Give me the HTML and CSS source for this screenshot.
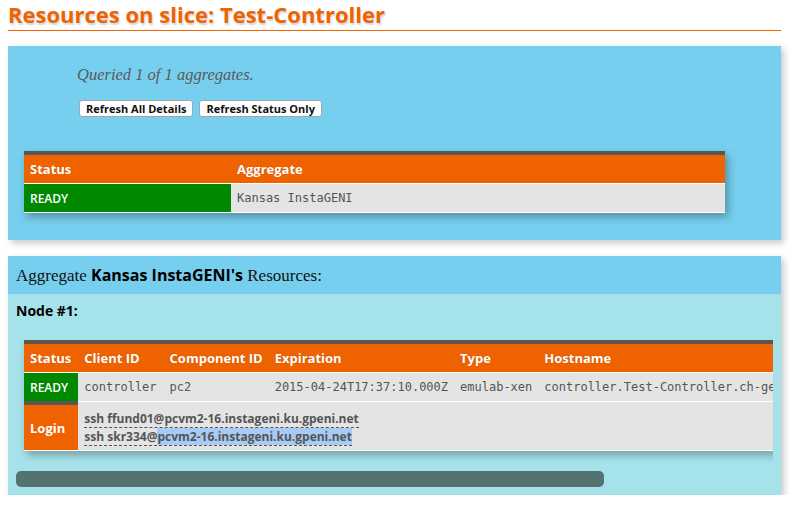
FILE: index.html
```html
<!DOCTYPE html>
<html>
<head>
<meta charset="utf-8">
<link rel="stylesheet" href="styles.css">
</head>
<body>
<div class="page">
  <h1 class="title">Resources on slice: Test-Controller</h1>

  <section class="box status-box">
    <p class="queried">Queried 1 of 1 aggregates.</p>
    <div class="buttons">
      <button class="btn">Refresh All Details</button>
      <button class="btn">Refresh Status Only</button>
    </div>
    <table class="tbl agg-tbl">
      <thead>
        <tr><th class="col-status">Status</th><th>Aggregate</th></tr>
      </thead>
      <tbody>
        <tr><td class="ready">READY</td><td class="mono">Kansas InstaGENI</td></tr>
      </tbody>
    </table>
  </section>

  <section class="box res-box">
    <div class="res-head">Aggregate <b class="agg-name">Kansas InstaGENI's</b> Resources:</div>
    <div class="res-body">
      <div class="node-title">Node #1:</div>
      <div class="node-scroll">
        <div class="node-clip">
          <table class="tbl node-tbl">
            <thead>
              <tr>
                <th class="c-wide">Status</th><th class="c-wide">Client ID</th><th>Component ID</th><th>Expiration</th><th>Type</th><th>Hostname</th>
              </tr>
            </thead>
            <tbody>
              <tr>
                <td class="ready c-wide">READY</td>
                <td class="mono c-wide">controller</td>
                <td class="mono">pc2</td>
                <td class="mono">2015-04-24T17:37:10.000Z</td>
                <td class="mono">emulab-xen</td>
                <td class="mono">controller.Test-Controller.ch-geni-net.instageni.ku.gpeni.net</td>
              </tr>
              <tr>
                <th class="login">Login</th>
                <td class="ssh" colspan="5">
                  <div><span class="ssh-line">ssh ffund01@pcvm2-16.instageni.ku.gpeni.net</span></div>
                  <div><span class="ssh-line">ssh skr334@<span class="sel">pcvm2-16.instageni.ku.gpeni.net</span></span></div>
                </td>
              </tr>
            </tbody>
          </table>
        </div>
        <div class="thumb"></div>
      </div>
    </div>
  </section>
</div>
</body>
</html>
```

FILE: styles.css
```css
html, body {
  margin: 0;
  padding: 0;
  background: #ffffff;
}

.page {
  padding: 0 10px 0 8px;
  font-family: "Open Sans", "DejaVu Sans", sans-serif;
}

.title {
  margin: 0;
  padding: 1px 0 3px;
  font-size: 22px;
  line-height: 26px;
  font-weight: 700;
  color: #ee6300;
  text-shadow: 1px 2px 2px rgba(0, 0, 0, 0.18);
  border-bottom: 1px solid #ee6300;
}

.box {
  background: #76cfee;
  box-shadow: 3px 3px 7px rgba(0, 0, 0, 0.22);
}

.status-box {
  margin-top: 15px;
  padding: 19px 16px 27px;
}

.queried {
  margin: 0 0 0 53px;
  font-family: "Liberation Serif", "DejaVu Serif", serif;
  font-style: italic;
  font-size: 16.5px;
  line-height: 20px;
  color: #5a5a5a;
}

.buttons {
  display: flex;
  gap: 6px;
  margin: 15px 0 0 55px;
}

.btn {
  font-family: "Open Sans", sans-serif;
  font-weight: 700;
  font-size: 11px;
  line-height: 13px;
  padding: 1px 6px;
  margin: 0;
  background: #ffffff;
  color: #111;
  border: 1px solid #9aa8b0;
  border-radius: 3px;
}

.tbl {
  border-collapse: separate;
  border-spacing: 0;
  border-top: 4px solid #5a5650;
  box-shadow: 3px 4px 8px rgba(0, 0, 0, 0.3);
  white-space: nowrap;
}

.tbl thead th {
  background: #ee6300;
  color: #ffffff;
  font-weight: 700;
  font-size: 13px;
  text-align: left;
  height: 28px;
  padding: 0 6px;
  text-shadow: 0 0 1px rgba(120, 40, 0, 0.4);
}

.tbl td {
  background: #e4e4e4;
  border-top: 1px solid #ffffff;
  height: 28px;
  padding: 0 6px;
}

.tbl tbody tr:last-child td,
.tbl tbody tr:last-child th {
  border-bottom: 1px solid #ffffff;
}

.tbl td.ready {
  background: #008800;
  color: #ffffff;
  font-weight: 600;
  font-size: 12px;
}

.mono {
  font-family: "DejaVu Sans Mono", "Liberation Mono", monospace;
  font-size: 12px;
  color: #555555;
}

.agg-tbl {
  margin-top: 34px;
  width: 701px;
}

.agg-tbl .col-status {
  width: 195px;
}

.node-tbl th.c-wide,
.node-tbl td.c-wide {
  padding-right: 7px;
}

.res-box {
  margin-top: 16px;
}

.res-head {
  height: 38px;
  line-height: 38px;
  padding-left: 8px;
  font-family: "Liberation Serif", "DejaVu Serif", serif;
  font-size: 17px;
  color: #111;
}

.agg-name {
  font-family: "Open Sans", sans-serif;
  font-weight: 700;
  font-size: 16px;
  color: #000;
}

.res-body {
  background: #a6e2e9;
  padding: 7px 8px 8px;
}

.node-title {
  font-weight: 700;
  font-size: 14px;
  line-height: 20px;
  color: #000;
}

.node-scroll {
  margin-top: 19px;
}

.node-clip {
  overflow: hidden;
  padding: 0 0 20px 8px;
}

.node-tbl .login {
  background: #ee6300;
  color: #ffffff;
  font-weight: 700;
  font-size: 13px;
  text-align: left;
  padding: 0 6px;
  border-top: 4px solid #5a5650;
}

.tbl td.ssh {
  height: auto;
  padding: 8px 6px 4px;
  font-weight: 700;
  font-size: 12px;
  color: #555555;
}

.ssh-line {
  display: inline-block;
  line-height: 16px;
  border-bottom: 1px dashed #555555;
}

.sel {
  background: #a8cbf6;
}

.thumb {
  width: 588px;
  height: 16px;
  border-radius: 5px;
  background: #557272;
}
```
